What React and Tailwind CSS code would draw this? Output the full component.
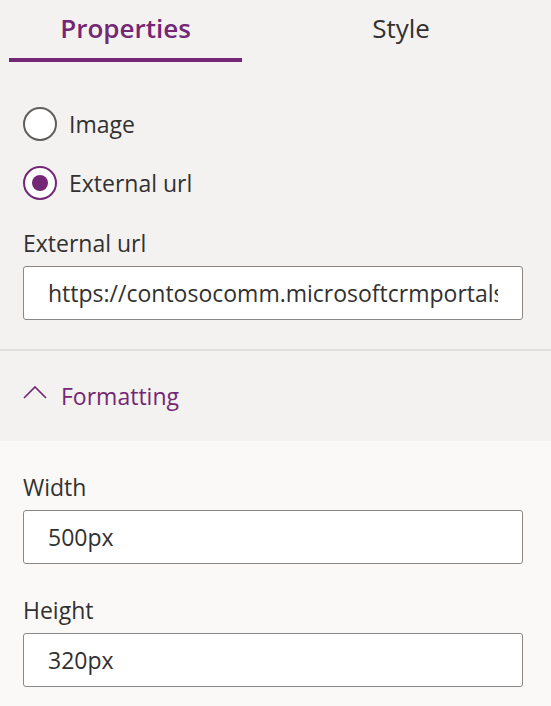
import React, { useState } from 'react';

const PURPLE = 'text-[#742774]';

function Radio({ checked, label, onClick }) {
  return (
    <button type="button" onClick={onClick} className="h-[59px] flex items-center gap-[12px] text-left">
      <span
        className={`w-[34px] h-[34px] rounded-full border-2 bg-white flex items-center justify-center shrink-0 ${
          checked ? 'border-[#742774]' : 'border-[#605e5c]'
        }`}
      >
        {checked && <span className="w-[16px] h-[16px] rounded-full bg-[#742774]" />}
      </span>
      <span className="text-[23px] leading-[32px] text-[#323130]">{label}</span>
    </button>
  );
}

function Field({ label, value, className = '' }) {
  return (
    <div className={className}>
      <div className="text-[23px] leading-[32px] text-[#323130]">{label}</div>
      <input
        readOnly
        value={value}
        className="mt-[7px] w-[500px] h-[54px] bg-white border-[1.5px] border-[#8a8886] rounded-[3px] px-[24px] text-[23px] text-[#323130] outline-none"
        style={{ fontFamily: 'inherit' }}
      />
    </div>
  );
}

export default function App() {
  const [tab, setTab] = useState('properties');
  const [source, setSource] = useState('url');

  return (
    <div className="w-[551px] h-[706px] overflow-hidden bg-[#f3f2f1] flex flex-col font-['Open_Sans',_'Noto_Sans',_sans-serif]">
      {/* tabs */}
      <div className="flex pt-[10px] pl-[9px]">
        <button type="button" onClick={() => setTab('properties')} className="w-[233px] shrink-0 flex flex-col items-center">
          <span className={`h-[36px] text-[26px] leading-[36px] font-semibold ${tab === 'properties' ? PURPLE : 'text-[#323130]'}`}>
            Properties
          </span>
          <span className={`mt-[12px] h-[4px] w-full ${tab === 'properties' ? 'bg-[#742774]' : 'bg-transparent'}`} />
        </button>
        <button type="button" onClick={() => setTab('style')} className="w-[318px] shrink-0 flex flex-col items-center">
          <span className={`h-[36px] text-[26px] leading-[36px] ${tab === 'style' ? PURPLE + ' font-semibold' : 'text-[#323130]'}`}>
            Style
          </span>
          <span className={`mt-[12px] h-[4px] w-full ${tab === 'style' ? 'bg-[#742774]' : 'bg-transparent'}`} />
        </button>
      </div>

      {/* source */}
      <div className="px-[23px] pt-[32px] flex flex-col">
        <Radio label="Image" checked={source === 'image'} onClick={() => setSource('image')} />
        <Radio label="External url" checked={source === 'url'} onClick={() => setSource('url')} />
        <Field className="mt-[15px]" label="External url" value="https://contosocomm.microsoftcrmportals.com/" />
      </div>

      <div className="mt-[29px] h-[2px] bg-[#e1dfdd]" />

      {/* formatting header */}
      <div className="h-[90px] flex items-center px-[23px] gap-[14px]">
        <svg width="24" height="14" viewBox="0 0 24 14" fill="none" className="mb-[8px]">
          <path d="M1 13 L12 2 L23 13" stroke="#742774" strokeWidth="1.6" />
        </svg>
        <span className={`text-[23px] leading-[32px] ${PURPLE}`}>Formatting</span>
      </div>

      {/* formatting body */}
      <div className="flex-1 bg-[#faf9f8] px-[23px] pt-[30px]">
        <Field label="Width" value="500px" />
        <Field className="mt-[30px]" label="Height" value="320px" />
      </div>
    </div>
  );
}
